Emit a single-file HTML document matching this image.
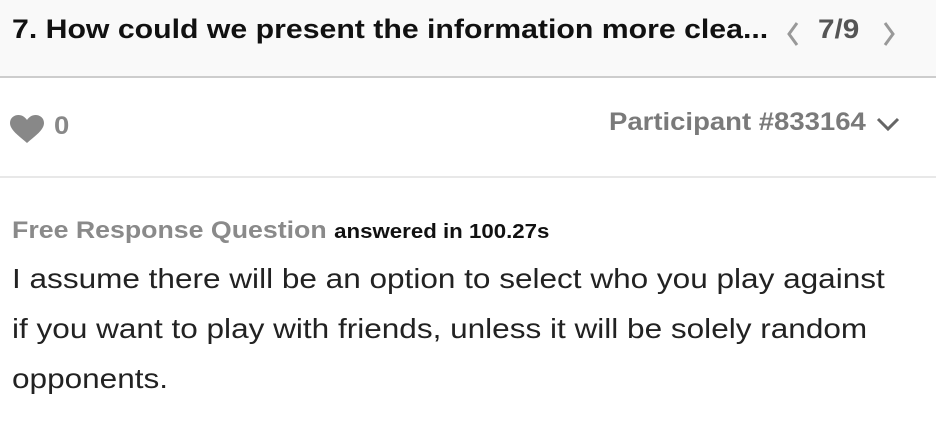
<!DOCTYPE html>
<html><head><style>
body{margin:0;width:936px;height:444px;background:#fff;font-family:"Liberation Sans",sans-serif;overflow:hidden;position:relative}
.hdr{position:absolute;left:0;top:0;width:936px;height:76px;background:#f9f9f9;border-bottom:2px solid #cdcdcd}
.s{transform-origin:0 0;white-space:nowrap;position:absolute}
.t{left:12px;top:14px;font-size:27px;font-weight:bold;color:#111;transform:scaleX(1.12)}
.nav{left:818px;top:14px;font-size:27px;font-weight:bold;color:#555;transform:scaleX(1.1)}
.div2{position:absolute;left:0;top:176px;width:936px;height:2px;background:#e8e8e8}
.zero{left:54px;top:112px;font-size:25px;font-weight:bold;color:#888;transform:scaleX(1.1)}
.part{left:609px;top:108px;font-size:25px;font-weight:bold;color:#7a7a7a;transform:scaleX(1.10)}
.frq{left:12px;top:217px;font-size:24px;font-weight:bold;color:#8a8a8a;transform:scaleX(1.113)}
.frq span{font-size:20px;color:#111}
.body{left:12px;top:254px;font-size:28px;line-height:50px;color:#222;transform:scaleX(1.126)}
</style></head><body>
<div class="hdr"></div>
<div class="s t">7. How could we present the information more clea...</div>
<svg style="position:absolute;left:782px;top:18px" width="22" height="32"><path d="M15 5 L7 16 L15 27" stroke="#999" stroke-width="3" fill="none"/></svg>
<div class="s nav">7/9</div>
<svg style="position:absolute;left:878px;top:18px" width="22" height="32"><path d="M7 5 L15 16 L7 27" stroke="#999" stroke-width="3" fill="none"/></svg>
<svg style="position:absolute;left:9px;top:114px" width="36" height="30" viewBox="0 0 36 30"><path d="M18 29 C10 22 1 16 1 9 C1 4 5 1 9.5 1 C13 1 16 3 18 6 C20 3 23 1 26.5 1 C31 1 35 4 35 9 C35 16 26 22 18 29Z" fill="#888"/></svg>
<div class="s zero">0</div>
<div class="s part">Participant #833164</div>
<svg style="position:absolute;left:874px;top:114px" width="28" height="20"><path d="M4 5 L14 15 L24 5" stroke="#666" stroke-width="3" fill="none"/></svg>
<div class="div2"></div>
<div class="s frq">Free Response Question <span>answered in 100.27s</span></div>
<div class="s body">I assume there will be an option to select who you play against<br>if you want to play with friends, unless it will be solely random<br>opponents.</div>
</body></html>
